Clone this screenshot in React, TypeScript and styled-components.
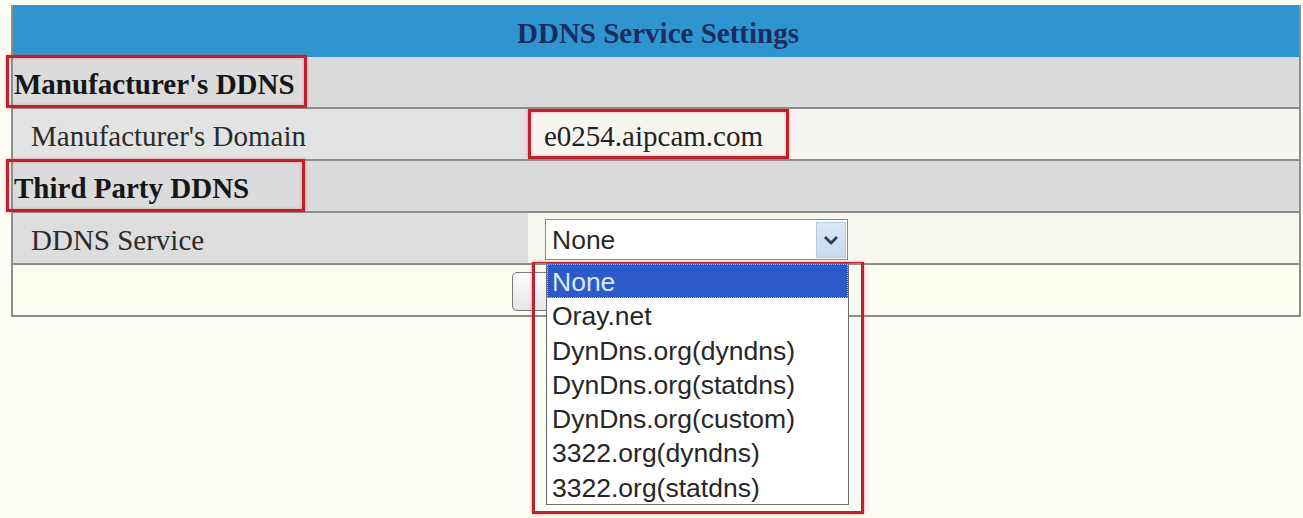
import styled, { createGlobalStyle } from 'styled-components'

const GlobalStyle = createGlobalStyle`
  html, body {
    margin: 0;
    padding: 0;
    background: #fdfcf4;
  }
  body {
    font-family: "Liberation Serif", "Times New Roman", serif;
  }
`

const Page = styled.div`
  padding: 5px 0 0 11px;
  width: 1303px;
  height: 518px;
  box-sizing: border-box;
  overflow: hidden;
`

const Table = styled.div`
  width: 1290px;
  border-left: 2px solid #8e8e8e;
  border-right: 2px solid #8e8e8e;
  box-sizing: border-box;
`

const Header = styled.div`
  height: 52px;
  background: #2f95d0;
  display: flex;
  align-items: center;
  justify-content: center;
  padding: 4px 0 0 4px;
  box-sizing: border-box;
  font-size: 29px;
  font-weight: 700;
  color: #1a2c61;
`

const Row = styled.div<{ $bg: string }>`
  display: flex;
  height: 52px;
  background: ${({ $bg }) => $bg};
  border-bottom: 2px solid #8c8c8c;
  box-sizing: border-box;
  position: relative;
`

const LabelCell = styled.div<{ $bg?: string; $indent?: boolean }>`
  width: 515px;
  flex-shrink: 0;
  display: flex;
  align-items: center;
  padding: 5px 0 0 ${({ $indent }) => ($indent ? '18px' : '0')};
  box-sizing: border-box;
  background: ${({ $bg }) => $bg || 'transparent'};
  font-size: 29px;
  color: #2b2b2b;
`

const ValueCell = styled.div<{ $bg?: string; $center?: boolean }>`
  flex: 1;
  display: flex;
  align-items: center;
  justify-content: ${({ $center }) => ($center ? 'center' : 'flex-start')};
  background: ${({ $bg }) => $bg || 'transparent'};
  font-size: 29px;
  color: #222;
`

const SectionTitle = styled.div`
  flex: 1;
  display: flex;
  align-items: center;
  font-size: 29px;
  font-weight: 700;
  color: #161616;
`

const Mark = styled.span`
  display: flex;
  align-items: center;
  box-sizing: border-box;
  border: 3px solid #b9232d;
  box-shadow: 0 0 3px rgba(235, 90, 100, 0.7), inset 0 0 3px rgba(235, 90, 100, 0.6);
`

const SectionMark = styled(Mark)<{ $width: number }>`
  height: 53px;
  margin: -2px 0 0 -7px;
  padding: 6px 0 0 5px;
  width: ${({ $width }) => $width}px;
`

const DomainMark = styled(Mark)`
  height: 50px;
  width: 261px;
  padding: 5px 0 0 13px;
`

const SelectWrap = styled.div`
  position: relative;
  margin: 3px 0 0 17px;
`

const SelectBox = styled.div`
  width: 303px;
  height: 41px;
  box-sizing: border-box;
  border: 1px solid #8b8b8b;
  background: #fff;
  display: flex;
  align-items: center;
  justify-content: space-between;
  padding: 2px 1px 0 6px;
  font-family: "Liberation Sans", Arial, sans-serif;
  font-size: 26.5px;
  color: #2a2a2a;
`

const ArrowBtn = styled.div`
  width: 30px;
  height: 36px;
  margin-top: -2px;
  box-sizing: border-box;
  border: 1px solid #b5c9de;
  background: linear-gradient(#dbe8f6, #c6daef);
  display: flex;
  align-items: center;
  justify-content: center;
`

const DropMark = styled.div`
  position: absolute;
  top: 43px;
  left: -13px;
  border: 3px solid #b9232d;
  border-top-width: 1px;
  padding: 0 12px 6px 11px;
  box-shadow: 0 0 3px rgba(235, 90, 100, 0.7);
  z-index: 2;
`

const List = styled.ul`
  margin: 0;
  padding: 0;
  list-style: none;
  width: 303px;
  box-sizing: border-box;
  border: 1px solid #6d6d6d;
  background: #fff;
  font-family: "Liberation Sans", Arial, sans-serif;
  font-size: 26.5px;
  color: #262626;
`

const Item = styled.li<{ $active?: boolean }>`
  height: 34.3px;
  line-height: 36px;
  padding-left: 5px;
  box-sizing: border-box;
  white-space: nowrap;
  background: ${({ $active }) => ($active ? '#2c5bc9' : 'transparent')};
  color: ${({ $active }) => ($active ? '#dbe8ff' : 'inherit')};
  outline: ${({ $active }) => ($active ? '1px dotted #c9c26a' : 'none')};
  outline-offset: -1px;
`

const Button = styled.button`
  width: 288px;
  height: 39px;
  margin-top: 3px;
  border: 1px solid #7a7a7a;
  border-radius: 5px;
  background: linear-gradient(#fdfdfd, #e6e6e6);
`

const services = [
  'None',
  'Oray.net',
  'DynDns.org(dyndns)',
  'DynDns.org(statdns)',
  'DynDns.org(custom)',
  '3322.org(dyndns)',
  '3322.org(statdns)',
]

export default function App() {
  return (
    <>
      <GlobalStyle />
      <Page>
        <Table>
          <Header>DDNS Service Settings</Header>
          <Row $bg="#dbdbdb">
            <SectionTitle>
              <SectionMark $width={301}>Manufacturer's DDNS</SectionMark>
            </SectionTitle>
          </Row>
          <Row $bg="#f6f5ef">
            <LabelCell $indent $bg="#e3e3e3">
              Manufacturer's Domain
            </LabelCell>
            <ValueCell>
              <DomainMark>e0254.aipcam.com</DomainMark>
            </ValueCell>
          </Row>
          <Row $bg="#dbdbdb">
            <SectionTitle>
              <SectionMark $width={299}>Third Party DDNS</SectionMark>
            </SectionTitle>
          </Row>
          <Row $bg="#f8f7ef">
            <LabelCell $indent $bg="#dddddd">
              DDNS Service
            </LabelCell>
            <ValueCell>
              <SelectWrap>
                <SelectBox>
                  None
                  <ArrowBtn>
                    <svg width="16" height="12" viewBox="0 0 16 12">
                      <path d="M2 3 L8 9 L14 3" fill="none" stroke="#2f4356" strokeWidth="3" />
                    </svg>
                  </ArrowBtn>
                </SelectBox>
                <DropMark>
                  <List>
                    {services.map((s, i) => (
                      <Item key={s} $active={i === 0}>
                        {s}
                      </Item>
                    ))}
                  </List>
                </DropMark>
              </SelectWrap>
            </ValueCell>
          </Row>
          <Row $bg="#fdfcf1">
            <ValueCell $center>
              <Button aria-label="Save" />
            </ValueCell>
          </Row>
        </Table>
      </Page>
    </>
  )
}
